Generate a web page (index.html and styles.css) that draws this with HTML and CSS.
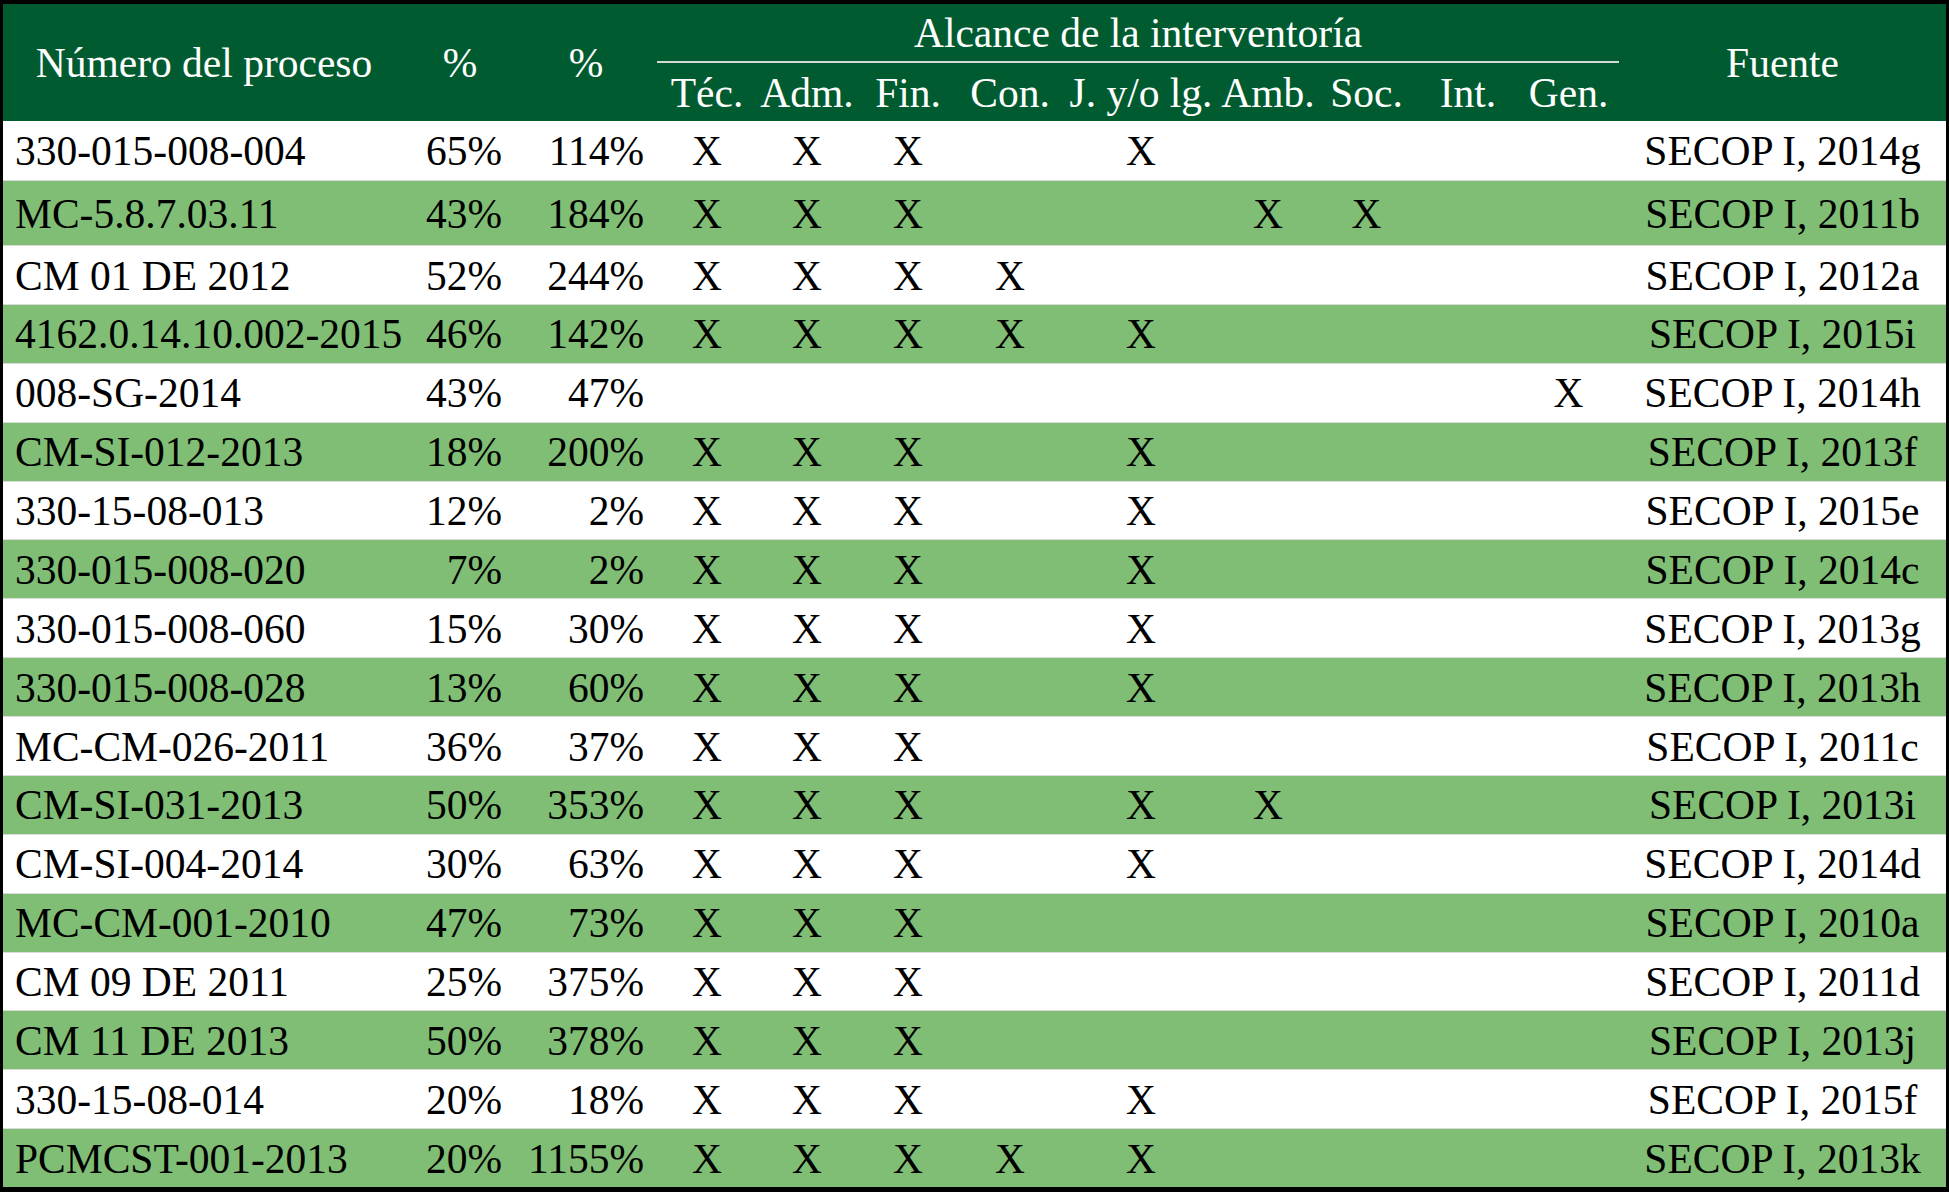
FILE: index.html
```html
<!DOCTYPE html>
<html lang="es">
<head>
<meta charset="utf-8">
<title>Alcance de la interventoría</title>
<link rel="stylesheet" href="styles.css">
</head>
<body>
<table class="grid">
  <colgroup>
    <col class="w-num"><col class="w-p1"><col class="w-p2">
    <col class="w-tec"><col class="w-adm"><col class="w-fin"><col class="w-con"><col class="w-jur">
    <col class="w-amb"><col class="w-soc"><col class="w-int"><col class="w-gen">
    <col class="w-src">
  </colgroup>
  <thead>
    <tr class="h-top">
      <th rowspan="2" class="h-main">Número del proceso</th>
      <th rowspan="2" class="h-main">%</th>
      <th rowspan="2" class="h-main">%</th>
      <th colspan="9" class="h-group">Alcance de la interventoría</th>
      <th rowspan="2" class="h-main">Fuente</th>
    </tr>
    <tr class="h-sub">
      <th>Téc.</th><th>Adm.</th><th>Fin.</th><th>Con.</th><th>J. y/o lg.</th><th>Amb.</th><th>Soc.</th><th>Int.</th><th>Gen.</th>
    </tr>
  </thead>
  <tbody>
    <tr class="r-first"><td class="num">330-015-008-004</td><td class="pct">65%</td><td class="pct">114%</td><td>X</td><td>X</td><td>X</td><td></td><td>X</td><td></td><td></td><td></td><td></td><td class="src">SECOP I, 2014g</td></tr>
    <tr class="r-tall"><td class="num">MC-5.8.7.03.11</td><td class="pct">43%</td><td class="pct">184%</td><td>X</td><td>X</td><td>X</td><td></td><td></td><td>X</td><td>X</td><td></td><td></td><td class="src">SECOP I, 2011b</td></tr>
    <tr><td class="num">CM 01 DE 2012</td><td class="pct">52%</td><td class="pct">244%</td><td>X</td><td>X</td><td>X</td><td>X</td><td></td><td></td><td></td><td></td><td></td><td class="src">SECOP I, 2012a</td></tr>
    <tr><td class="num">4162.0.14.10.002-2015</td><td class="pct">46%</td><td class="pct">142%</td><td>X</td><td>X</td><td>X</td><td>X</td><td>X</td><td></td><td></td><td></td><td></td><td class="src">SECOP I, 2015i</td></tr>
    <tr><td class="num">008-SG-2014</td><td class="pct">43%</td><td class="pct">47%</td><td></td><td></td><td></td><td></td><td></td><td></td><td></td><td></td><td>X</td><td class="src">SECOP I, 2014h</td></tr>
    <tr><td class="num">CM-SI-012-2013</td><td class="pct">18%</td><td class="pct">200%</td><td>X</td><td>X</td><td>X</td><td></td><td>X</td><td></td><td></td><td></td><td></td><td class="src">SECOP I, 2013f</td></tr>
    <tr><td class="num">330-15-08-013</td><td class="pct">12%</td><td class="pct">2%</td><td>X</td><td>X</td><td>X</td><td></td><td>X</td><td></td><td></td><td></td><td></td><td class="src">SECOP I, 2015e</td></tr>
    <tr><td class="num">330-015-008-020</td><td class="pct">7%</td><td class="pct">2%</td><td>X</td><td>X</td><td>X</td><td></td><td>X</td><td></td><td></td><td></td><td></td><td class="src">SECOP I, 2014c</td></tr>
    <tr><td class="num">330-015-008-060</td><td class="pct">15%</td><td class="pct">30%</td><td>X</td><td>X</td><td>X</td><td></td><td>X</td><td></td><td></td><td></td><td></td><td class="src">SECOP I, 2013g</td></tr>
    <tr><td class="num">330-015-008-028</td><td class="pct">13%</td><td class="pct">60%</td><td>X</td><td>X</td><td>X</td><td></td><td>X</td><td></td><td></td><td></td><td></td><td class="src">SECOP I, 2013h</td></tr>
    <tr><td class="num">MC-CM-026-2011</td><td class="pct">36%</td><td class="pct">37%</td><td>X</td><td>X</td><td>X</td><td></td><td></td><td></td><td></td><td></td><td></td><td class="src">SECOP I, 2011c</td></tr>
    <tr><td class="num">CM-SI-031-2013</td><td class="pct">50%</td><td class="pct">353%</td><td>X</td><td>X</td><td>X</td><td></td><td>X</td><td>X</td><td></td><td></td><td></td><td class="src">SECOP I, 2013i</td></tr>
    <tr><td class="num">CM-SI-004-2014</td><td class="pct">30%</td><td class="pct">63%</td><td>X</td><td>X</td><td>X</td><td></td><td>X</td><td></td><td></td><td></td><td></td><td class="src">SECOP I, 2014d</td></tr>
    <tr><td class="num">MC-CM-001-2010</td><td class="pct">47%</td><td class="pct">73%</td><td>X</td><td>X</td><td>X</td><td></td><td></td><td></td><td></td><td></td><td></td><td class="src">SECOP I, 2010a</td></tr>
    <tr><td class="num">CM 09 DE 2011</td><td class="pct">25%</td><td class="pct">375%</td><td>X</td><td>X</td><td>X</td><td></td><td></td><td></td><td></td><td></td><td></td><td class="src">SECOP I, 2011d</td></tr>
    <tr><td class="num">CM 11 DE 2013</td><td class="pct">50%</td><td class="pct">378%</td><td>X</td><td>X</td><td>X</td><td></td><td></td><td></td><td></td><td></td><td></td><td class="src">SECOP I, 2013j</td></tr>
    <tr><td class="num">330-15-08-014</td><td class="pct">20%</td><td class="pct">18%</td><td>X</td><td>X</td><td>X</td><td></td><td>X</td><td></td><td></td><td></td><td></td><td class="src">SECOP I, 2015f</td></tr>
    <tr><td class="num">PCMCST-001-2013</td><td class="pct">20%</td><td class="pct">1155%</td><td>X</td><td>X</td><td>X</td><td>X</td><td>X</td><td></td><td></td><td></td><td></td><td class="src">SECOP I, 2013k</td></tr>
  </tbody>
</table>
</body>
</html>
```

FILE: styles.css
```css
html, body {
  margin: 0;
  padding: 0;
  background: #000;
}

body {
  padding: 4px 0 0 3px;
  width: 1949px;
  height: 1192px;
  box-sizing: border-box;
  overflow: hidden;
}

.grid {
  border-collapse: separate;
  border-spacing: 0;
  table-layout: fixed;
  width: 1943px;
  font-family: "Liberation Serif", "Times New Roman", serif;
  font-size: 41.5px;
  color: #000;
}

.w-num { width: 402px; }
.w-p1 { width: 110px; }
.w-p2 { width: 142px; }
.w-tec { width: 100px; }
.w-adm { width: 100px; }
.w-fin { width: 102px; }
.w-con { width: 102px; }
.w-jur { width: 160px; }
.w-amb { width: 94px; }
.w-soc { width: 103px; }
.w-int { width: 100px; }
.w-gen { width: 101px; }
.w-src { width: 327px; }

.grid th {
  background: #005c30;
  color: #fff;
  font-weight: normal;
  padding: 3px 0 0;
  text-align: center;
  vertical-align: middle;
  white-space: nowrap;
  line-height: 1.15;
}

.h-top { height: 59px; }
.h-sub { height: 58px; }

.h-group {
  border-bottom: 2px solid #d5d9d6;
  box-sizing: border-box;
}

.grid .h-sub th {
  padding-top: 4px;
}

.grid td {
  padding: 3px 0 0;
  text-align: center;
  vertical-align: middle;
  white-space: nowrap;
  line-height: 1.15;
  border-top: 1px solid #d9dcd8;
}

.grid tbody tr { height: 58.875px; background: #fff; }
.grid tbody tr:nth-child(even) { background: #7fbe74; }
.grid tbody tr.r-first { height: 59px; }
.grid tbody tr.r-first td { border-top: 0; }
.grid tbody tr.r-tall { height: 65px; }

.grid td.num {
  text-align: left;
  padding-left: 12px;
}

.grid td.pct {
  text-align: right;
  padding-right: 13px;
}

.grid td.src {
  text-align: center;
}
```
